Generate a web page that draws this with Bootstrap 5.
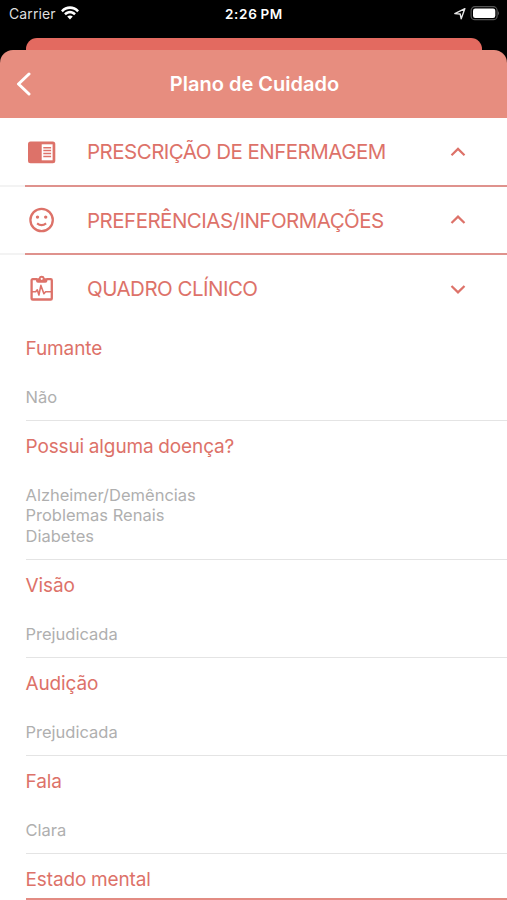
<!DOCTYPE html>
<html lang="pt-BR">
<head>
<meta charset="utf-8">
<meta name="viewport" content="width=device-width, initial-scale=1">
<title>Plano de Cuidado</title>
<link href="https://cdn.jsdelivr.net/npm/bootstrap@5.3.0/dist/css/bootstrap.min.css" rel="stylesheet">
<style>
  body { font-family: Inter, "Liberation Sans", sans-serif; width: 507px; height: 900px; }
  svg { display: block; flex: none; }
  .screen { height: 900px; }
  .status { height: 38px; padding: 5px 8px 0 9px; font-size: 14px; line-height: 18px; }
  .status > div { flex: 1 1 0; }
  .carrier { letter-spacing: .12px; color: #dedede; }
  .clock { font-size: 13.5px; letter-spacing: .65px; word-spacing: -1px; }
  .sheet-back { height: 12px; margin: 0 25px 0 25.5px; background: #e36a60; border-radius: 11px 11px 0 0; }
  .title-bar { height: 68.3px; background: #e78d7f; border-radius: 13px 13px 0 0; padding: 0 16px; }
  .title-text { font-size: 20px; line-height: 24px; }
  .title-end { width: 14px; }
  .coral { color: #dd7269; }
  .section-row { height: 68.4px; padding: 0 40px 0 25px; }
  .section-row svg { margin-bottom: 1px; }
  .section-name { font-size: 20.5px; font-weight: 400; margin-left: 29px; letter-spacing: -.52px; line-height: 26px; white-space: nowrap; }
  .rule { height: 2px; background: linear-gradient(to right, #f3f3f3 25px, #df928d 25px); margin-top: -2px; }
  .entries { margin-top: -.6px; }
  .entry { margin-left: 25.5px; border-bottom: 1px solid #e4e4e4; padding: 13.4px 0 12.8px; }
  .entry h2 { font-size: 19px; line-height: 26px; font-weight: 400; margin: 0 0 24.6px; letter-spacing: -.12px; word-spacing: -.5px; }
  .entry p { font-size: 16.5px; line-height: 20.3px; color: #afafaf; margin: 0; }
  .entry.last { border-bottom: 2px solid #e38c83; padding-bottom: 5px; }
  .entry.last h2 { margin: 0; }
</style>
</head>
<body class="m-0 overflow-hidden bg-white">
<main class="screen overflow-hidden">
  <div class="bg-black">
    <div class="status d-flex text-white">
      <div class="d-flex gap-1">
        <span class="carrier">Carrier</span>
        <svg width="20" height="17" viewBox="0 0 20 17" fill="#fff"><path d="M1 5.4C6-.1 14-.1 19 5.4L17.2 7.2C13.3 3 6.7 3 2.8 7.2zM4.1 8.5c3.4-3.6 8.4-3.6 11.8 0l-1.8 1.8c-2.4-2.5-5.8-2.5-8.2 0zM7.2 11.6c1.7-1.6 3.9-1.6 5.6 0L10 14.5z"/></svg>
      </div>
      <span class="clock fw-semibold">2:26 PM</span>
      <div class="d-flex justify-content-end">
        <svg width="46" height="18" viewBox="0 0 46 18"><path d="M1.8 8.6 11.9 3.6 8.2 13.8 7.2 9z" fill="none" stroke="#e8e8e8" stroke-width="1.35" stroke-linejoin="round"/><rect x="18.1" y="1.7" width="26" height="13" rx="3.8" fill="#000" stroke="#555" stroke-width="1.2"/><rect x="20" y="3.5" width="22.3" height="9.4" rx="2.2" fill="#fff"/><path d="M45.2 6.2q2 2 0 4z" fill="#666"/></svg>
      </div>
    </div>
    <div class="sheet-back"></div>
    <header class="title-bar d-flex align-items-center text-white">
      <svg width="16" height="24" viewBox="0 0 16 24" fill="none" stroke="#fff" stroke-width="3" stroke-linecap="round" stroke-linejoin="round"><path d="M13 2 2.5 12 13 22"/></svg>
      <h1 class="title-text fw-semibold m-0 flex-grow-1 text-center">Plano de Cuidado</h1>
      <span class="title-end"></span>
    </header>
  </div>

  <div class="section-row d-flex align-items-center coral">
    <svg width="33" height="30" viewBox="0 0 33 30"><rect x="3" y="4.5" width="27.3" height="21.7" rx="2.5" fill="currentColor"/><path d="M16.7 7.3h10.9v16H16.7z" fill="#fff"/><path d="M18.3 10.7h7.8M18.3 13.5h7.8M18.3 16.5h7.8M18.3 19.4h7.8" stroke="currentColor" stroke-width="1.5"/></svg>
    <span class="section-name">PRESCRIÇÃO DE ENFERMAGEM</span>
    <svg class="ms-auto" width="18" height="18" viewBox="0 0 18 18" fill="none" stroke="currentColor" stroke-width="2.2"><path d="M2.5 12.3 9 5.9 15.5 12.3"/></svg>
  </div>
  <div class="rule"></div>
  <div class="section-row d-flex align-items-center coral">
    <svg width="33" height="30" viewBox="0 0 33 30"><circle cx="16.6" cy="15" r="11.2" fill="none" stroke="currentColor" stroke-width="2.3"/><circle cx="12.5" cy="12.1" r="1.7" fill="currentColor"/><circle cx="20.7" cy="12.1" r="1.7" fill="currentColor"/><path d="M12.1 18.3q4.5 3.7 9 0" fill="none" stroke="currentColor" stroke-width="2.2"/></svg>
    <span class="section-name">PREFERÊNCIAS/INFORMAÇÕES</span>
    <svg class="ms-auto" width="18" height="18" viewBox="0 0 18 18" fill="none" stroke="currentColor" stroke-width="2.2"><path d="M2.5 12 9 5.6 15.5 12"/></svg>
  </div>
  <div class="rule"></div>
  <div class="section-row d-flex align-items-center coral">
    <svg width="33" height="30" viewBox="0 0 33 30" fill="none" stroke="currentColor"><path d="M12 5.2H7.7a1.1 1.1 0 0 0-1.1 1.1v18.1a1.1 1.1 0 0 0 1.1 1.1h18a1.1 1.1 0 0 0 1.1-1.1V6.3a1.1 1.1 0 0 0-1.1-1.1h-4.2" stroke-width="2.3"/><path d="M11 4.2h2.6a3.2 3.2 0 0 1 6.2 0h2.6v2.6q0 2-2 2H13q-2 0-2-2zM16.7 3.7a1.1 1.1 0 1 0 0 2.2 1.1 1.1 0 0 0 0-2.2z" fill="currentColor" fill-rule="evenodd" stroke="none"/><path d="M7 17.8h3.7l1.6-2 1.6 5.2 2-9.6 3 8.4 1.7-2h5.6" stroke-width="1.6" stroke-linejoin="round"/></svg>
    <span class="section-name">QUADRO CLÍNICO</span>
    <svg class="ms-auto" width="18" height="18" viewBox="0 0 18 18" fill="none" stroke="currentColor" stroke-width="2.2"><path d="M2.5 6 9 12.4 15.5 6"/></svg>
  </div>

  <section class="entries">
    <div class="entry"><h2 class="coral">Fumante</h2><p>Não</p></div>
    <div class="entry"><h2 class="coral">Possui alguma doença?</h2><p>Alzheimer/Demências<br>Problemas Renais<br>Diabetes</p></div>
    <div class="entry"><h2 class="coral">Visão</h2><p>Prejudicada</p></div>
    <div class="entry"><h2 class="coral">Audição</h2><p>Prejudicada</p></div>
    <div class="entry"><h2 class="coral">Fala</h2><p>Clara</p></div>
    <div class="entry last"><h2 class="coral">Estado mental</h2></div>
  </section>
</main>
<script src="https://cdn.jsdelivr.net/npm/bootstrap@5.3.0/dist/js/bootstrap.bundle.min.js"></script>
</body>
</html>
